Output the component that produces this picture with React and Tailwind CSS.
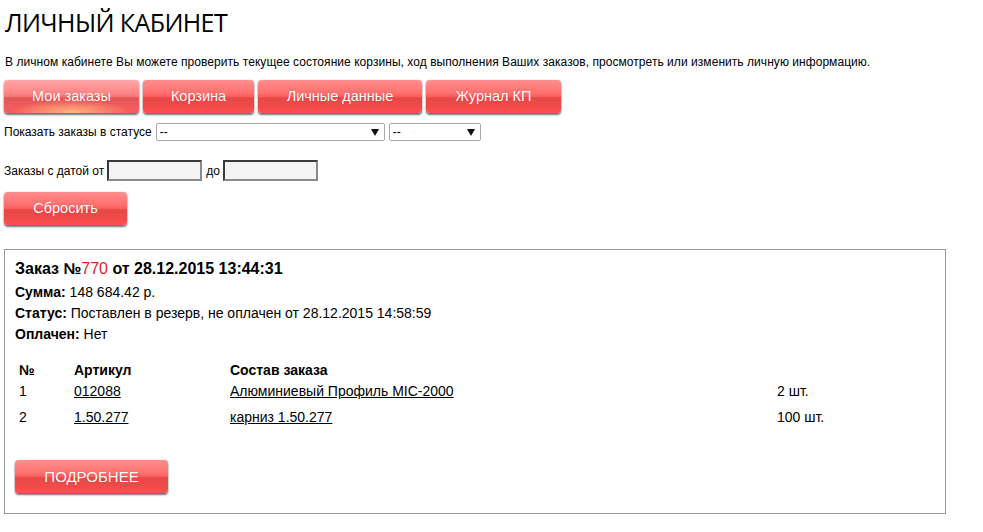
import { useState } from 'react'

const btnBase =
  'rounded-[4px] text-white text-[14.5px] leading-none flex items-center justify-center shadow-[0_2px_2px_rgba(0,0,0,0.55),0_0_1px_rgba(0,0,0,0.5)] [text-shadow:0_0_1px_rgba(180,0,0,0.4)]'
const btnRed =
  'bg-[linear-gradient(#ff8e8e_0%,#ff6f6f_40%,#ff5c5c_50%,#e54848_54%,#f24a4a_80%,#ff5050_100%)]'
const btnActive =
  'bg-[radial-gradient(ellipse_45%_40%_at_50%_100%,rgba(255,190,130,0.95),rgba(255,190,130,0)_100%),linear-gradient(#ffa6a6_0%,#ff8686_40%,#f57474_50%,#e25757_54%,#f05c5c_80%,#f85a5a_100%)]'

function Btn({ children, w, active, className = '' }) {
  return (
    <button type="button" className={`${btnBase} ${active ? btnActive : btnRed} ${w} h-[33px] ${className}`}>
      {children}
    </button>
  )
}

function Select({ w }) {
  return (
    <div className={`${w} h-[18px] border border-[#a9a9a9] rounded-[2px] bg-white flex items-center justify-between pl-[3px] pr-[5px] text-[12px]`}>
      <span className="leading-none">--</span>
      <svg width="8" height="7" viewBox="0 0 8 7"><path d="M0 0h8L4 7z" fill="#111" /></svg>
    </div>
  )
}

const items = [
  { n: 1, art: '012088', name: 'Алюминиевый Профиль MIC-2000', qty: '2 шт.' },
  { n: 2, art: '1.50.277', name: 'карниз 1.50.277', qty: '100 шт.' },
]

const inputCls =
  'w-[95px] h-[21px] bg-[#f3f3f3] border-2 border-t-[#3a3a3a] border-l-[#3a3a3a] border-b-[#8a8a8a] border-r-[#8a8a8a]'

export default function App() {
  const [tab] = useState(0)
  const tabs = [
    ['Мои заказы', 'w-[135px]'],
    ['Корзина', 'w-[111px]'],
    ['Личные данные', 'w-[164px]'],
    ['Журнал КП', 'w-[135px]'],
  ]
  return (
    <div className="w-[983px] h-[532px] bg-white text-black font-['Liberation_Sans',Arial,sans-serif] pl-[4px] overflow-hidden">
      <h1 className="font-['Open_Sans',sans-serif] text-[25px] leading-[30px] pt-[7px] pl-px tracking-[-0.6px]">ЛИЧНЫЙ КАБИНЕТ</h1>
      <p className="text-[12px] leading-[14px] mt-[18px] pl-px tracking-[0.05px]">
        В личном кабинете Вы можете проверить текущее состояние корзины, ход выполнения Ваших заказов, просмотреть или изменить личную информацию.
      </p>
      <div className="flex gap-[4px] mt-[11px]">
        {tabs.map(([t, w], i) => (
          <Btn key={t} w={w} active={i === tab}>{t}</Btn>
        ))}
      </div>
      <div className="flex items-center gap-[4px] mt-[10px] text-[12px]">
        <span>Показать заказы в статусе</span>
        <Select w="w-[229px]" />
        <Select w="w-[92px]" />
      </div>
      <div className="flex items-center mt-[19px] text-[12px]">
        <span>Заказы с датой от</span>
        <div className={`${inputCls} ml-[3px]`} />
        <span className="ml-[4px] mr-[3px]">до</span>
        <div className={inputCls} />
      </div>
      <Btn w="w-[123px]" className="mt-[11px]">Сбросить</Btn>
      <div className="mt-[24px] w-[942px] h-[265px] border border-[#999] pl-[10px] pt-[10px] text-[14px] leading-[21px]">
        <div className="text-[16px] font-bold leading-[18px] mb-[4px]">
          Заказ №<span className="text-[#e8202a] font-normal">770</span> от 28.12.2015 13:44:31
        </div>
        <div><b>Сумма:</b> 148 684.42 р.</div>
        <div><b>Статус:</b> Поставлен в резерв, не оплачен от 28.12.2015 14:58:59</div>
        <div><b>Оплачен:</b> Нет</div>
        <div className="mt-[17px] grid grid-cols-[55px_156px_547px_auto] pl-[4px]">
          <b className="leading-[16px]">№</b>
          <b className="leading-[16px]">Артикул</b>
          <b className="leading-[16px]">Состав заказа</b>
          <span />
          {items.map((it) => (
            <div key={it.n} className="contents">
              <span className="leading-[26px]">{it.n}</span>
              <a className="underline leading-[26px] justify-self-start">{it.art}</a>
              <a className="underline leading-[26px] justify-self-start">{it.name}</a>
              <span className="leading-[26px]">{it.qty}</span>
            </div>
          ))}
        </div>
        <Btn w="w-[153px]" className="mt-[30px] text-[15px]">ПОДРОБНЕЕ</Btn>
      </div>
    </div>
  )
}
